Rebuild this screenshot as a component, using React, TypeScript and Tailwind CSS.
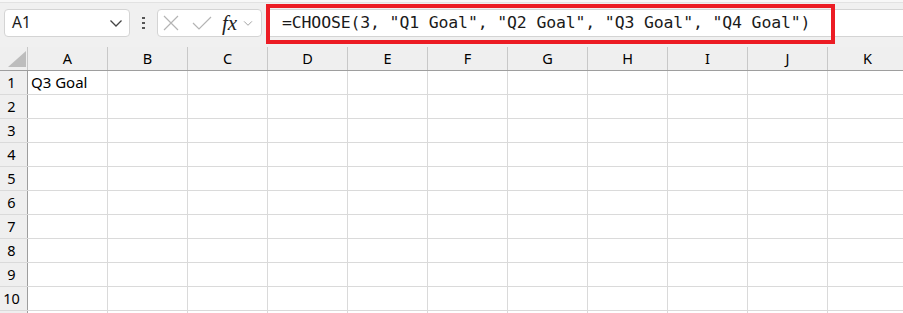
const COLUMNS = ["A", "B", "C", "D", "E", "F", "G", "H", "I", "J", "K"];
const ROWS = [1, 2, 3, 4, 5, 6, 7, 8, 9, 10];

const FORMULA = '=CHOOSE(3, "Q1 Goal", "Q2 Goal", "Q3 Goal", "Q4 Goal")';

function Chevron({ className }: { className?: string }) {
  return (
    <svg viewBox="0 0 12 7" className={className} fill="none">
      <polyline points="0.5,0.5 6,6 11.5,0.5" stroke="currentColor" strokeWidth="1.3" />
    </svg>
  );
}

function Toolbar() {
  return (
    <div className="relative h-[47px] bg-[#f0f0f0]">
      <div className="h-[3px] border-b border-[#e2e2e2] bg-[#f7f7f7]" />
      <div className="flex pt-[6px]">
        {/* name box */}
        <div className="ml-[4px] flex h-[28px] w-[126px] items-center justify-between rounded-[4px] border border-[#d4d4d4] bg-white pl-[7px] pr-[7px]">
          <span className="text-[15.5px] text-[#1a1a1a]">A1</span>
          <Chevron className="h-[7px] w-[12px] text-[#444]" />
        </div>
        {/* dots */}
        <div className="flex w-[27px] flex-col items-center justify-center gap-[3px]">
          <span className="h-[2px] w-[3px] bg-[#555]" />
          <span className="h-[2px] w-[3px] bg-[#555]" />
          <span className="h-[2px] w-[3px] bg-[#555]" />
        </div>
        {/* cancel / enter / fx */}
        <div className="flex h-[28px] w-[105px] items-center rounded-[4px] border border-[#d4d4d4] bg-white">
          <svg viewBox="0 0 16 16" className="ml-[5px] h-[16px] w-[16px]" fill="none">
            <path d="M1 1L15 15M15 1L1 15" stroke="#b4b4b4" strokeWidth="1.2" />
          </svg>
          <svg viewBox="0 0 20 14" className="ml-[13px] h-[14px] w-[20px]" fill="none">
            <polyline points="1,7 7,13 19,1" stroke="#b4b4b4" strokeWidth="1.2" />
          </svg>
          <span className="ml-[10px] font-['Liberation_Serif',serif] text-[21px] italic leading-none text-[#222]">
            fx
          </span>
          <Chevron className="ml-[6px] h-[5px] w-[10px] text-[#9a9a9a]" />
        </div>
        {/* formula input */}
        <div className="ml-[4px] flex h-[28px] flex-1 items-center border-y border-l border-[#d4d4d4] bg-white pl-[15px]">
          <span className="whitespace-pre font-['DejaVu_Sans_Mono',monospace] text-[16.5px] tracking-[-0.15px] text-[#1a1a1a]">
            {FORMULA}
          </span>
        </div>
      </div>
      {/* highlight annotation */}
      <div className="absolute left-[266px] top-[4px] h-[40px] w-[569px] border-[4px] border-[#ec1c24]" />
    </div>
  );
}

function Grid() {
  return (
    <div className="font-['Noto_Sans',sans-serif] text-[14.5px] text-black">
      <div className="flex h-[24px] border-b border-[#9e9e9e] bg-[#efefef]">
        <div className="relative w-[28px] shrink-0 border-r border-[#c8c8c8]">
          <svg viewBox="0 0 18 16" className="absolute left-[8px] top-[4px] h-[16px] w-[18px]">
            <polygon points="18,0 18,16 0,16" fill="#bdbdbd" />
          </svg>
        </div>
        {COLUMNS.map((c) => (
          <div
            key={c}
            className="flex w-[80px] shrink-0 items-center justify-center border-r border-[#c8c8c8]"
          >
            {c}
          </div>
        ))}
      </div>
      {ROWS.map((r) => (
        <div key={r} className="flex h-[24px] border-b border-[#dadada]">
          <div className="flex w-[28px] shrink-0 items-center justify-center border-r border-[#9e9e9e] bg-[#efefef] pr-[4px]">
            {r}
          </div>
          {COLUMNS.map((c) => (
            <div
              key={c}
              className="flex w-[80px] shrink-0 items-center border-r border-[#dadada] pl-[3px] text-[15px]"
            >
              {r === 1 && c === "A" ? "Q3 Goal" : ""}
            </div>
          ))}
        </div>
      ))}
      {/* next row, only its top edge is in view */}
      <div className="flex h-[24px]">
        <div className="w-[28px] shrink-0 border-r border-[#9e9e9e] bg-[#efefef]" />
        {COLUMNS.map((c) => (
          <div key={c} className="w-[80px] shrink-0 border-r border-[#dadada]" />
        ))}
      </div>
    </div>
  );
}

export default function App() {
  return (
    <div className="h-[313px] w-[903px] overflow-hidden bg-white font-['Noto_Sans',sans-serif]">
      <Toolbar />
      <Grid />
    </div>
  );
}
